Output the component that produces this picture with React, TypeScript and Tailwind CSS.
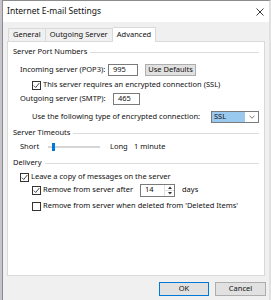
import { ReactNode } from "react"

const font = { fontFamily: '"Noto Sans", "Liberation Sans", sans-serif' }

function Check({ checked = false }: { checked?: boolean }) {
  return (
    <span className="w-[9px] h-[9px] border border-[#333] bg-white flex items-center justify-center shrink-0">
      {checked && (
        <svg width="7" height="7" viewBox="0 0 7 7">
          <path d="M0.8 3.6 L2.7 5.5 L6.3 1" fill="none" stroke="#333" strokeWidth="0.9" />
        </svg>
      )}
    </span>
  )
}

function SectionLabel({ children }: { children: ReactNode }) {
  return (
    <div className="h-[10px] flex items-center gap-[3px] pr-[5px]">
      <span className="whitespace-nowrap">{children}</span>
      <span className="flex-1 h-px bg-[#dcdcdc]" />
    </div>
  )
}

function Field({ value, width }: { value: string; width: string }) {
  return (
    <div className={`${width} h-[12px] shrink-0 border border-[#7a7a7a] bg-white flex items-center pl-[4px]`}>
      {value}
    </div>
  )
}

export default function App() {
  return (
    <div className="w-[271px] h-[300px] flex bg-[#f0f0f0] text-[7.5px] text-[#111] leading-none overflow-hidden whitespace-nowrap" style={font}>
      <div className="w-[2px] bg-[#c9c4cc]" />
      <div className="flex-1 flex flex-col border-l border-t border-[#8c8c8c] border-r-2 border-r-[#e0e0e0]">
        {/* title bar */}
        <div className="h-[21px] bg-white flex items-center pl-[4px] pr-[5px]">
          <span className="text-[8.5px]">Internet E-mail Settings</span>
          <svg className="ml-auto" width="8" height="8" viewBox="0 0 8 8">
            <path d="M0.5 0.5 L7.5 7.5 M7.5 0.5 L0.5 7.5" stroke="#222" strokeWidth="0.9" />
          </svg>
        </div>

        {/* tabs */}
        <div className="flex items-end h-[19px] pl-[5px] pr-[4px]">
          <div className="h-[13px] px-[4px] flex items-center border border-b-0 border-[#d9d9d9] bg-[#f0f0f0]">General</div>
          <div className="h-[13px] px-[4px] flex items-center border border-b-0 border-l-0 border-[#d9d9d9] bg-[#f0f0f0]">Outgoing Server</div>
          <div className="h-[15px] px-[4px] flex items-center border border-b-0 border-l-0 border-[#d9d9d9] bg-white -mb-px relative">Advanced</div>
        </div>

        {/* panel */}
        <div className="mx-[4px] h-[235px] border border-[#d9d9d9] bg-white pl-[5px] pt-[5px] flex flex-col">
          <SectionLabel>Server Port Numbers</SectionLabel>

          <div className="mt-[7px] h-[12px] flex items-center pl-[7px]">
            <span className="w-[88px] shrink-0">Incoming server (POP3):</span>
            <Field value="995" width="w-[30px]" />
            <div className="ml-[7px] w-[51px] h-[12px] shrink-0 border border-[#adadad] bg-[#e1e1e1] flex items-center justify-center">Use Defaults</div>
          </div>

          <div className="mt-[4px] h-[10px] flex items-center gap-[2px] pl-[19px]">
            <Check checked />
            <span>This server requires an encrypted connection (SSL)</span>
          </div>

          <div className="mt-[3px] h-[12px] flex items-center pl-[7px]">
            <span className="w-[93px] shrink-0">Outgoing server (SMTP):</span>
            <Field value="465" width="w-[27px]" />
          </div>

          <div className="mt-[6px] h-[12px] flex items-center pl-[19px]">
            <span className="w-[179px] shrink-0">Use the following type of encrypted connection:</span>
            <div className="w-[48px] h-[12px] shrink-0 border border-[#7a7a7a] bg-white flex items-stretch">
              <div className="flex-1 bg-[#99c9ef] flex items-center pl-[2px]">SSL</div>
              <div className="w-[13px] flex items-center justify-center">
                <svg width="6" height="4" viewBox="0 0 6 4">
                  <path d="M0.5 0.8 L3 3.2 L5.5 0.8" fill="none" stroke="#555" strokeWidth="0.8" />
                </svg>
              </div>
            </div>
          </div>

          <div className="mt-[5px]">
            <SectionLabel>Server Timeouts</SectionLabel>
          </div>

          <div className="mt-[4px] h-[10px] flex items-center pl-[7px]">
            <span className="w-[28px] shrink-0">Short</span>
            <div className="w-[52px] h-[8px] shrink-0 relative flex items-center">
              <div className="w-full h-[2px] bg-[#e7e7e7] border-y border-[#d6d6d6]" />
              <div className="absolute left-[4px] top-0 w-[3px] h-[8px] bg-[#007ad9]" />
            </div>
            <span className="ml-[10px] w-[24px] shrink-0">Long</span>
            <span>1 minute</span>
          </div>

          <div className="mt-[6px]">
            <SectionLabel>Delivery</SectionLabel>
          </div>

          <div className="mt-[4px] h-[10px] flex items-center gap-[2px] pl-[7px]">
            <Check checked />
            <span>Leave a copy of messages on the server</span>
          </div>

          <div className="mt-[2px] h-[12px] flex items-center pl-[19px]">
            <Check checked />
            <span className="ml-[2px] w-[97px] shrink-0">Remove from server after</span>
            <div className="w-[35px] h-[13px] shrink-0 border border-[#7a7a7a] bg-white flex items-center">
              <span className="flex-1 pl-[4px]">14</span>
              <div className="w-[10px] h-full flex flex-col border-l border-[#e0e0e0]">
                <div className="flex-1 flex items-center justify-center border-b border-[#e0e0e0]">
                  <svg width="4" height="3" viewBox="0 0 4 3"><path d="M0 3 L2 0.5 L4 3 Z" fill="#333" /></svg>
                </div>
                <div className="flex-1 flex items-center justify-center">
                  <svg width="4" height="3" viewBox="0 0 4 3"><path d="M0 0 L2 2.5 L4 0 Z" fill="#333" /></svg>
                </div>
              </div>
            </div>
            <span className="ml-[7px]">days</span>
          </div>

          <div className="mt-[5px] h-[10px] flex items-center gap-[2px] pl-[19px]">
            <Check />
            <span>Remove from server when deleted from 'Deleted Items'</span>
          </div>
        </div>

        {/* buttons */}
        <div className="mt-[6px] flex justify-end gap-[6px] pr-[3px]">
          <div className="w-[50px] h-[14px] border border-[#0078d7] bg-[#e1e1e1] flex items-center justify-center">OK</div>
          <div className="w-[51px] h-[14px] border border-[#adadad] bg-[#e1e1e1] flex items-center justify-center">Cancel</div>
        </div>
      </div>
    </div>
  )
}
